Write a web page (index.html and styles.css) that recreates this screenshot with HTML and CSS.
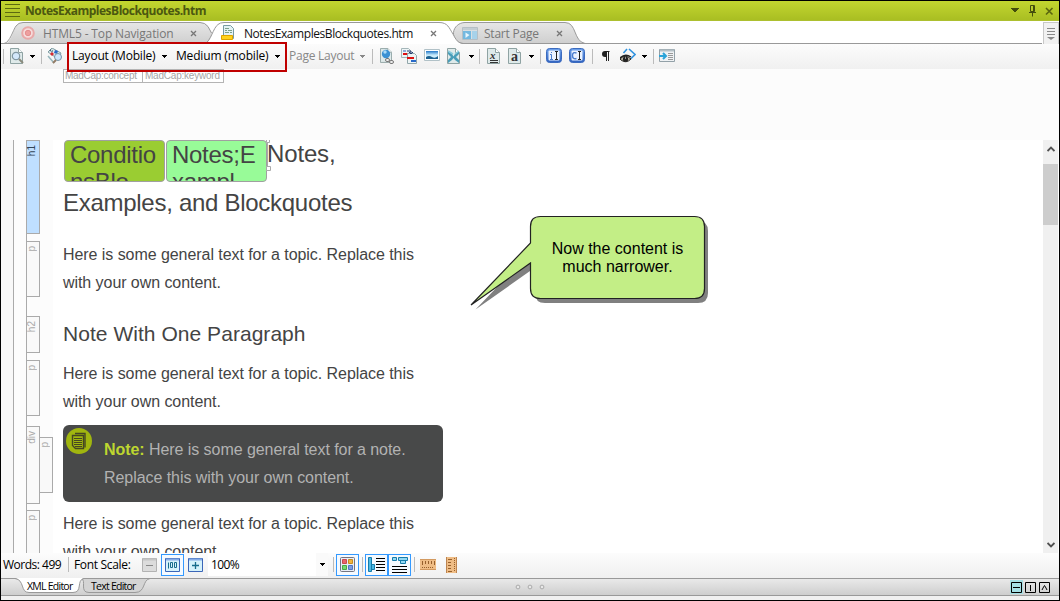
FILE: index.html
```html
<!DOCTYPE html>
<html lang="en">
<head>
<meta charset="utf-8">
<title>NotesExamplesBlockquotes.htm</title>
<link rel="stylesheet" href="styles.css">
</head>
<body>
<svg class="defs" width="0" height="0">
  <defs>
    <linearGradient id="tabGray" x1="0" y1="0" x2="0" y2="1"><stop offset="0" stop-color="#e6e6e6"/><stop offset="1" stop-color="#cfcfcf"/></linearGradient>
    <linearGradient id="blueBtn" x1="0" y1="0" x2="0" y2="1"><stop offset="0" stop-color="#6fa3ec"/><stop offset="1" stop-color="#2f62c0"/></linearGradient>
    <linearGradient id="sky" x1="0" y1="0" x2="0" y2="1"><stop offset="0" stop-color="#2277c8"/><stop offset=".5" stop-color="#c4e9fb"/><stop offset="1" stop-color="#e2f6ff"/></linearGradient>
    <symbol id="page" viewBox="0 0 13 16"><path d="M.5.5h8l4 4v11H.5z" fill="#dfeaea" stroke="#8fa3a3"/><path d="M8.500.5v4h4" fill="#fff" stroke="#8fa3a3"/></symbol>
    <symbol id="down" viewBox="0 0 5 3"><path d="M0 0h5v1H4v1H3v1H2V2H1V1H0z"/></symbol>
  </defs>
</svg>
<div class="window">
  <header class="titlebar">
    <svg class="burger" width="15" height="14"><path d="M0 .5h15M0 4.500h15M0 8.500h15M0 12.500h15" stroke="#5c6a10"/></svg>
    <span class="title">NotesExamplesBlockquotes.htm</span>
    <svg class="winbtns" width="44" height="12"><path d="M1 3h8v1H8v1H7v1H6v1H4V6H3V5H2V4H1z" fill="#434d0c"/><path d="M20.500.5h4v6h-4zM23.500 1v5M19 7.500h7M22.500 8v3.500" fill="none" stroke="#434d0c"/><path d="M36 3l6.500 6.500M42.500 3L36 9.500" stroke="#59650f" stroke-width="1.600"/></svg>
  </header>

  <nav class="tabs">
    <svg class="tabshapes" width="1058" height="24">
      <path d="M0 22.500h4C10 22 12 10 15 5.500Q17.500 1.500 22 1.500H199Q204 1.500 207 5.500L211 12V22.500z" fill="url(#tabGray)"/>
      <path d="M0 22.500h3C9 21.500 12 9 15 5Q17.500 1.500 22 1.500H199Q204 1.500 207 5.500L210.500 12" fill="none" stroke="#999"/>
      <path d="M580 22.500H462C456 22 452 17 452.500 11.500C453 6 458 1.500 464 1.500H564C576 1.500 572 20 584 22.500z" fill="url(#tabGray)" stroke="#999"/>
      <path d="M204 23.500C210 21 212 7 217 3.500Q219 1.500 223 1.500H438C447 1.500 448 7 452 13C455 19 457 22 462 23.500z" fill="#fff"/>
      <path d="M0 22.500H204C210 20 212 7 217 3.500Q219 1.500 223 1.500H438C447 1.500 448 7 452 13C455 19 457 22 462 22.500H1041" fill="none" stroke="#999"/>
    </svg>
    <div class="tab t1">
      <svg width="14" height="14"><circle cx="7" cy="7" r="5.800" fill="#f6dcdc" stroke="#e8a9a9" stroke-width="2"/><circle cx="7" cy="7" r="2.700" fill="#ee9f9f" stroke="#e48f8f"/></svg>
      <span class="label">HTML5 - Top Navigation</span>
      <svg class="x" width="7" height="7"><path d="M1 1l5 5M6 1L1 6"/></svg>
    </div>
    <div class="tab t2">
      <svg width="14" height="16"><path d="M2.500.5h7l3 3v10h-10z" fill="#e3f2f4" stroke="#779ba3"/><path d="M4 3.500h4M4 5.500h2M7 5.500h4M4 7.500h4M9 7.500h2" stroke="#7aa08a"/><path d="M.5 10.500h11v4H.5z" fill="#ffd21c" stroke="#dda400"/></svg>
      <span class="label">NotesExamplesBlockquotes.htm</span>
      <svg class="x" width="7" height="7"><path d="M1 1l5 5M6 1L1 6"/></svg>
    </div>
    <div class="tab t3">
      <svg width="16" height="13"><path d="M.5.500h15v12H.5z" fill="#d9dfe2" stroke="#b5bfc5"/><path d="M1 1h14v2H1z" fill="#c3cdd3"/><path d="M1 4h8v8H1z" fill="#74b9e0"/><path d="M3.500 5.500L7.500 8l-4 3z" fill="#e8f6fd"/><path d="M10 4h5v8h-5z" fill="#a7d2ea"/></svg>
      <span class="label">Start Page</span>
      <svg class="x" width="7" height="7"><path d="M1 1l5 5M6 1L1 6"/></svg>
    </div>
    <div class="tablist"><svg width="8" height="12"><path d="M0 .5h8M0 3.500h8M0 6.500h8" stroke="#888"/><path d="M0 9h8L4 12z" fill="#888"/></svg></div>
  </nav>

  <div class="toolbar">
    <i class="sep"></i>
    <svg class="up" width="15" height="16"><use href="#page" x="1" width="13" height="16"/><circle cx="7" cy="8" r="3.700" fill="#d3e8fb" stroke="#8197a2" stroke-width="1.200"/><path d="M10 11l4 4" stroke="#8a8a7c" stroke-width="2"/></svg>
    <svg class="dn" width="5" height="3"><use href="#down"/></svg>
    <i class="sep"></i>
    <svg class="up" width="16" height="16"><path d="M1 4l4-4 9 5-3 6z" fill="#dce7ea" stroke="#819fa4"/><path d="M3 2l3 2" stroke="#315d73" stroke-width="2" stroke-dasharray="1 1"/><path d="M5 4l2 2-2 2-2-2z" fill="#d72c32"/><path d="M8 2l3 1-1 3-3-1z" fill="#2769c9"/><path d="M1 8l6 7" stroke="#96b6bc" stroke-width="1.500"/><circle cx="11" cy="9" r="3.500" fill="#cbe5fb" stroke="#7493a6"/><path d="M9 12l-3 3" stroke="#937c66" stroke-width="2"/></svg>
    <span class="txt lay">Layout (Mobile)</span>
    <svg class="dn" width="5" height="3"><use href="#down"/></svg>
    <span class="txt med">Medium (mobile)</span>
    <svg class="dn" width="5" height="3"><use href="#down"/></svg>
    <span class="txt pag">Page Layout</span>
    <svg class="dn dim" width="5" height="3"><use href="#down"/></svg>
    <i class="sep"></i>
    <svg class="up1" width="15" height="16"><use href="#page" x="1" width="12" height="15"/><circle cx="7" cy="6" r="4.200" fill="#3b91d3"/><circle cx="6" cy="4" r="1.700" fill="#a9daf8"/><rect x="6.500" y="10.500" width="4" height="3" rx="1.500" fill="#eee" stroke="#777"/><rect x="10.500" y="12.500" width="4" height="3" rx="1.500" fill="#eee" stroke="#777"/></svg>
    <svg class="up1" width="16" height="16"><path d="M.5.500h7l2 2v7h-9z" fill="#edf4f5" stroke="#a4b6b9"/><path d="M2 3h3" stroke="#345fba"/><path d="M2 6h5" stroke="#d11" stroke-width="2"/><path d="M6.500 5.500h7l2 2v8h-9z" fill="#edf4f5" stroke="#91a6aa"/><path d="M6 3h4v2M8 4l2 2 2-2" stroke="#263c70" fill="none"/><path d="M6 10h7" stroke="#d11" stroke-width="2"/><path d="M10 13h5" stroke="#2769c9" stroke-width="2"/></svg>
    <svg class="up4" width="16" height="12"><path d="M.5.500h15v11H.5z" fill="#fff" stroke="#b1c1c7"/><path d="M2 2h12v8H2z" fill="url(#sky)"/><path d="M2 8q3-2 6 0t6-1v3H2z" fill="#1d6291"/></svg>
    <svg class="up1" width="14" height="16"><use href="#page" x="0" width="13" height="16"/><path d="M1 3l4 3 1.500 2.500L8 6l4-3v3L9 9l3 3v3l-4-3-1.500-2L5 12l-4 3v-3l3-3-3-3z" fill="#4a9db8"/><path d="M1 3l5 3M12 3L8 6" stroke="#8acbdc" stroke-width="1.500"/></svg>
    <svg class="dn" width="5" height="3"><use href="#down"/></svg>
    <i class="sep"></i>
    <svg class="up1" width="13" height="16"><use href="#page" width="13" height="16"/><text x="3" y="11" class="glyph it">x</text><path d="M3 12.500h8M3 14.500h8" stroke="#333"/></svg>
    <svg class="up1" width="13" height="16"><use href="#page" width="13" height="16"/><text x="3" y="13" class="glyph big">a</text></svg>
    <svg class="dn" width="5" height="3"><use href="#down"/></svg>
    <i class="sep"></i>
    <svg class="up" width="16" height="15"><rect x=".5" y=".5" width="15" height="14" rx="3" fill="url(#blueBtn)" stroke="#3c6bbe"/><rect x="2.500" y="2.500" width="11" height="10" rx="1" fill="#eaf2ff"/><path d="M5.500 4v1M4 6.500h1.500V11M4 11.500h3" stroke="#4a7dce" fill="none"/><path d="M9 3.500h3M10.500 3.500v8M9 11.500h3" stroke="#222"/></svg>
    <svg class="up" width="16" height="15"><rect x=".5" y=".5" width="15" height="14" rx="3" fill="url(#blueBtn)" stroke="#3c6bbe"/><rect x="2.500" y="2.500" width="11" height="10" rx="1" fill="#eaf2ff"/><path d="M7.500 5Q3.500 3.500 3.500 7.500T7.500 10.500" stroke="#4a7dce" stroke-width="1.400" fill="none"/><path d="M9 3.500h3M10.500 3.500v8M9 11.500h3" stroke="#222"/></svg>
    <i class="sep"></i>
    <svg class="up" width="12" height="12"><path d="M9.500 1H5Q2 1 2 4t3 3h1v4h1V2h1v9h1V2h.5z" fill="#222"/></svg>
    <svg class="up1" width="16" height="16"><path d="M7 1L3.500 5M9 1l6 5.500-4.500 4.500" stroke="#3293df" stroke-width="1.600" fill="none"/><path d="M0 11Q5 5.500 11 11 6 16 1 12z" fill="#beb9a9" stroke="#292723"/><circle cx="5.500" cy="11.200" r="2.600" fill="#222"/><path d="M0 10Q5 5 11 9" stroke="#222" fill="none" stroke-width="1.500"/><path d="M5 10h1" stroke="#fff"/></svg>
    <svg class="dn" width="5" height="3"><use href="#down"/></svg>
    <i class="sep"></i>
    <svg class="up" width="16" height="13"><path d="M.5.500h15v12H.5z" fill="#eff2f4" stroke="#93a1a8"/><path d="M1 1.500h14" stroke="#b4c0c6" stroke-width="2"/><path d="M9 4.500h5M9 6.500h5M9 8.500h5M9 10.500h5" stroke="#999"/><path d="M0 7h6M4 4l3 3-3 3" stroke="#2ba3d8" stroke-width="2" fill="none"/></svg>
    <div class="redbox"></div>
  </div>

  <div class="crumbs"><span class="c1">MadCap:concept</span><span class="c2">MadCap:keyword</span></div>

  <main class="editor">
    <div class="gutter"></div>
    <div class="bars">
      <div class="bar h1b"><b>h1</b></div>
      <div class="bar p1b"><b>p</b></div>
      <div class="bar h2b"><b>h2</b></div>
      <div class="bar p2b"><b>p</b></div>
      <div class="bar divb"><b>div</b><div class="bar inner"><b>p</b></div></div>
      <div class="bar p3b"><b>p</b></div>
    </div>
    <article class="topic">
      <h1><span class="cond olive">Conditio<br>nsBlo</span><span class="cond mint">Notes;E<br>xampl</span><span class="head">Notes,</span><br>Examples, and Blockquotes</h1>
      <p class="first">Here is some general text for a topic. Replace this<br>with your own content.</p>
      <h2>Note With One Paragraph</h2>
      <p>Here is some general text for a topic. Replace this<br>with your own content.</p>
      <div class="note">
        <svg width="26" height="26"><circle cx="13" cy="13" r="13" fill="#a1b60f"/><path d="M9 5.500h10v14" fill="none" stroke="#454622" stroke-width="1.400"/><path d="M6.500 7.500h11v13h-8l-3-3z" fill="none" stroke="#454622" stroke-width="1.400"/><path d="M8 10.500h8M8 12.500h8M8 14.500h8M8 16.500h8M9 18.500h7" stroke="#454622"/></svg>
        <p><strong>Note:</strong> Here is some general text for a note.<br>Replace this with your own content.</p>
      </div>
      <p class="last">Here is some general text for a topic. Replace this<br>with your own content.</p>
      <svg class="handle" width="5" height="31"><path d="M1.500 3v24" stroke="#aaa"/><path d="M.5 0v2.500h3V0M.5 26.500h4v4h-4z" fill="#fff" stroke="#aaa"/></svg>
    </article>
    <div class="callout">
      <svg width="240" height="96"><path transform="translate(4.500 4.500)" fill="#808080" d="M70.500 1.500H223.500Q233.500 1.500 233.500 11.500V73.500Q233.500 83.500 223.500 83.500H70.500Q60.500 83.500 60.500 73.500V48L1 90 60.500 28V11.500Q60.500 1.500 70.500 1.500z"/><path fill="#c3ee86" stroke="#222" stroke-width="1.200" d="M70.500 1.500H224.500Q234.500 1.500 234.500 11.500V73.500Q234.500 83.500 224.500 83.500H70.500Q60.500 83.500 60.500 73.500V48L1 90 60.500 28V11.500Q60.500 1.500 70.500 1.500z"/></svg>
      <div class="calltext">Now the content is<br>much narrower.</div>
    </div>
    <div class="scroll">
      <svg width="8" height="6"><path d="M.5 5L4 1.500 7.500 5" stroke="#505050" stroke-width="1.900" fill="none"/></svg>
      <div class="thumb"></div>
      <svg class="bot" width="8" height="6"><path d="M.5 1L4 4.500 7.500 1" stroke="#505050" stroke-width="1.900" fill="none"/></svg>
    </div>
  </main>

  <div class="status">
    <span class="txt words">Words: 499</span>
    <i class="sep"></i>
    <span class="txt fs">Font Scale:</span>
    <svg width="15" height="14"><path d="M.5.500h14v13H.5z" fill="#dcdcdc" stroke="#b2b2b2"/><path d="M1 1.500h13" stroke="#c5c5c5" stroke-width="2"/><path d="M4 7.500h7" stroke="#888"/></svg>
    <div class="sel s1"><svg width="15" height="14"><path d="M.5.500h14v13H.5z" fill="#d5f2fb" stroke="#3b66b8"/><path d="M1 1.500h13" stroke="#86abe5" stroke-width="2"/><path d="M3.500 4.500v6M5.500 4.500h2v5h-2zM9.500 4.500h2v5h-2z" stroke="#176c8b" fill="none"/></svg></div>
    <svg width="15" height="14"><path d="M.5.500h14v13H.5z" fill="#d5f2fb" stroke="#3b66b8"/><path d="M1 1.500h13" stroke="#86abe5" stroke-width="2"/><path d="M4 7.500h7M7.500 4v7" stroke="#176c8b" stroke-width="1.300"/></svg>
    <div class="combo"><span class="txt pct">100%</span><span class="drop"><svg width="5" height="3"><use href="#down"/></svg></span></div>
    <i class="sep"></i>
    <div class="sel"><svg width="15" height="16"><rect x=".5" y=".5" width="14" height="14" rx="1" fill="#e8edf7" stroke="#727582"/><path d="M2.500 2.500h4v4h-4z" fill="#e9636a" stroke="#c9494f"/><path d="M8.500 2.500h4v4h-4z" fill="#f0b53f" stroke="#c98a1c"/><path d="M2.500 8.500h4v4h-4z" fill="#7ad673" stroke="#48a944"/><path d="M8.500 8.500h4v4h-4z" fill="#7c9de3" stroke="#5274c2"/></svg></div>
    <i class="sep"></i>
    <div class="sel"><svg width="18" height="16"><path d="M.5.500h3v14h-3zM3.500 7.500h3v5h-3z" fill="#4cb9e5" stroke="#167caa"/><path d="M8 1.500h9M8 4.500h9M8 7.500h9M8 10.500h9M8 13.500h9" stroke="#000"/></svg></div>
    <div class="sel s3"><svg width="16" height="16"><path d="M.5.500h4v3h-4zM6.500.5h9v3h-9zM8.500 3.500h5v3h-5z" fill="#91d8f3" stroke="#167caa"/><path d="M0 9.500h15M0 12.500h15M0 15.500h15" stroke="#000"/></svg></div>
    <i class="sep"></i>
    <svg width="16" height="11"><path d="M0 0h16v11H0z" fill="#efbd86"/><path d="M0 .5h16M0 10.500h16" stroke="#d39a60"/><path d="M2.500 2v4M5.500 2v3M8.500 2v3M11.500 2v3M14.500 2v4" stroke="#97602c"/><path d="M2 8.500h12" stroke="#97602c" stroke-dasharray="1 1"/></svg>
    <svg width="11" height="16"><path d="M0 0h11v16H0z" fill="#efbd86"/><path d="M.5 0v16M10.500 0v16" stroke="#bc8450"/><path d="M2 2.500h4M2 5.500h3M2 8.500h3M2 11.500h3M2 14.500h4" stroke="#97602c"/><path d="M8.500 1v14" stroke="#97602c" stroke-dasharray="1 1"/></svg>
  </div>

  <footer class="views">
    <svg class="viewshapes" width="160" height="17"><path d="M80 .5C86 2 78 14.500 88 14.500H134C145 14.500 141 2 149 .5z" fill="#d4d4d4" stroke="#999"/><path d="M14 0C24 2 19 14.500 28 14.500H72C82 14.500 75 2 83 0z" fill="#fff"/><path d="M14 .5C24 2 19 14.500 28 14.500H72C82 14.500 75 2 83 .5" fill="none" stroke="#999"/></svg>
    <span class="view v1">XML Editor</span><span class="view v2">Text Editor</span>
    <svg class="dots" width="30" height="6"><g fill="#e8e8e8" stroke="#aaa"><circle cx="3" cy="3" r="1.900"/><circle cx="15" cy="3" r="1.900"/><circle cx="27" cy="3" r="1.900"/></g></svg>
    <svg class="split" width="41" height="14"><path d="M0 0h13v14H0z" fill="#a5e0e5"/><path d="M1.500 2.500h10v10h-10zM3 7.500h7M15.500 2.500h10v10h-10zM20.500 5v6M29.500 2.500h10v10h-10z" fill="none" stroke="#000"/><path d="M32 10l1-2 1.500-2.500L36 8l1 2" fill="none" stroke="#000"/></svg>
  </footer>
</div>
</body>
</html>
```
FILE: styles.css
```css
* { box-sizing: border-box; }
body { margin: 0; width: 1060px; height: 601px; overflow: hidden; font-family: "Open Sans", "Noto Sans", sans-serif; font-size: 12px; color: #000; }
svg { display: block; flex: none; }
.defs { position: absolute; }
.window { width: 1060px; height: 601px; border: 1px solid #000; background: #f0f0f0; display: flex; flex-direction: column; }
.txt, .label, .title, .view { white-space: nowrap; }

.titlebar { height: 20px; flex: none; display: flex; align-items: center; padding: 0 5px 0 4px; background: linear-gradient(#c3d630, #a9be22); border-bottom: 1px solid #adc02f; }
.title { margin-left: 5px; font-weight: 700; color: #4b5710; letter-spacing: -.49px; }
.winbtns { margin-left: auto; }

.tabs { height: 23px; flex: none; display: flex; position: relative; background: #fff; }
.tabshapes { position: absolute; left: 0; top: 0; }
.tab { position: relative; display: flex; align-items: center; height: 24px; flex: none; }
.t1 { margin-left: 20px; width: 200px; color: #777; }
.t2 { width: 241px; color: #111; }
.t3 { width: 120px; color: #777; }
.t1 .label { margin-left: 8px; width: 147px; letter-spacing: -.14px; }
.t2 .label { margin-left: 9px; width: 186px; letter-spacing: -.44px; }
.t3 .label { margin-left: 6px; width: 72px; letter-spacing: -.22px; }
.x path { stroke: #777; stroke-width: 1.300; }
.tablist { position: relative; margin-left: auto; width: 16px; height: 22px; margin-top: 1px; background: #f1f1f1; border: 1px solid #c8c8c8; border-bottom: 0; display: flex; align-items: center; justify-content: center; }

.toolbar { position: relative; height: 25px; flex: none; padding-left: 2px; display: grid; grid-template-columns: 6px 20px 12px 6px 25px 89px 15px 98px 15px 70px 13px 7px 22px 23px 23px 21px 11px 8px 21px 20px 12px 6px 23px 23px 8px 20px 21px 12px 6px 16px; align-items: center; background: linear-gradient(#fcfcfc, #f0f0f0); }
.sep { display: block; width: 1px; height: 15px; flex: none; background: #bbb; }
.dn { margin-left: 1px; }
.dim { fill: #888; }
.up, .up1 { margin-top: -2px; }
.up4 { margin-top: -4px; }
.lay { letter-spacing: -.18px; }
.med { letter-spacing: -.17px; }
.lay, .med, .pag { margin-top: -2px; }
.pag { color: #888; letter-spacing: -.25px; }
.glyph { font-family: "Liberation Serif", serif; font-weight: 700; font-size: 11px; fill: #333; }
.it { font-style: italic; }
.big { font-size: 14px; }
.redbox { position: absolute; left: 66px; top: -2px; width: 220px; height: 30px; border: 2px solid #c00000; }

.crumbs { height: 71px; flex: none; padding-left: 62px; display: flex; background: #fcfcfc; font: 10px "Liberation Sans", sans-serif; color: #a5a5a5; }
.crumbs span { height: 14px; border: 1px solid #b4b4b4; line-height: 12px; padding-left: 1px; white-space: nowrap; background: #fff; letter-spacing: -.28px; }
.c1 { width: 80px; }
.crumbs .c2 { width: 82px; margin-left: -1px; padding-left: 2px; letter-spacing: -.22px; }

.editor { position: relative; height: 413px; flex: none; display: flex; overflow: hidden; background: #fff; font-family: "Liberation Sans", Arial, sans-serif; }
.gutter { width: 13px; flex: none; background: #f8f8f8; border-right: 1px solid #aaa; }
.bars { width: 39px; padding-left: 12px; flex: none; background: linear-gradient(90deg, #fcfcfc 12px, #aaa 12px, #aaa 13px, #fcfcfc 13px); }
.bar { width: 14px; border: 1px solid #aaa; background: #f9f9f9; display: flex; justify-content: center; font-size: 10px; line-height: 10px; color: #aaa; }
.bar b { font-weight: 400; writing-mode: vertical-rl; transform: rotate(180deg); margin: 4px 3px 0 0; align-self: flex-start; }
.h1b { height: 94px; background: #bfdfff; color: #345; }
.p1b { height: 56px; margin-top: 7px; }
.h2b { height: 37px; margin-top: 19px; }
.p2b { height: 56px; margin-top: 7px; }
.divb { position: relative; height: 78px; margin-top: 10px; }
.inner { position: absolute; left: 12px; top: 10px; height: 56px; }
.p3b { height: 60px; margin-top: 6px; }

.topic { position: relative; width: 391px; padding-left: 10px; flex: none; color: #444; font-size: 16px; line-height: 28px; white-space: nowrap; letter-spacing: -.06px; }
.topic h1 { margin: 0; font-weight: 400; font-size: 24px; height: 88px; line-height: 33px; letter-spacing: -.28px; }
.cond { display: inline-block; vertical-align: top; width: 101px; height: 42px; overflow: hidden; margin: 0 1px 0 0; border: 1px solid #a0a0a0; border-radius: 4px; padding: 0 0 0 5px; line-height: 27px; }
.cond::first-line { line-height: 25px; }
.cond.olive { background: #9acd32; margin-left: 1px; }
.mint { background: #98fb98; }
.head { display: inline-block; vertical-align: top; height: 46px; line-height: 28px; margin-left: -1px; letter-spacing: -.15px; }
.handle { position: absolute; left: 213px; top: 0; }
.topic p { margin: 0; }
.topic .first { padding-top: 13px; }
.topic h2 { margin: 23px 0 12px; font-weight: 400; font-size: 21px; line-height: 28px; letter-spacing: .04px; }
.note { display: flex; width: 380px; height: 77px; margin-top: 9px; border-radius: 6px; background: #484949; color: #b2b2b2; padding: 3px 0 0 3px; }
.topic .note p { margin: 8px 0 0 12px; letter-spacing: -.06px; }
.note strong { color: #bed630; }
.topic .last { margin-top: 8px; }

.callout { position: absolute; left: 469px; top: 75px; width: 240px; height: 96px; color: #111; }
.calltext { position: absolute; left: 61px; top: 25px; width: 173px; text-align: center; font-size: 16px; line-height: 18px; color: #000; }
.scroll { width: 15px; margin: 0 1px 0 auto; background: #f0f0f0; display: flex; flex-direction: column; align-items: center; padding: 6px 0 5px; }
.thumb { width: 15px; height: 61px; margin-top: 12px; background: #cdcdcd; }
.bot { margin-top: auto; }

.status { height: 25px; flex: none; display: flex; align-items: center; padding: 0 0 2px 2px; background: linear-gradient(#fcfcfc, #f0f0f0); }
.words { width: 65px; letter-spacing: -.5px; }
.fs { margin-left: 5px; width: 68px; letter-spacing: -.32px; }
.sel { width: 23px; height: 22px; border: 1px solid #3399ff; background: #f5faff; display: flex; align-items: center; justify-content: center; flex: none; }
.s1 { margin: 0 4px; }
.combo { width: 120px; height: 23px; margin-left: 5px; display: flex; align-items: center; background: #fff; }
.pct { margin-left: 3px; letter-spacing: -.6px; }
.drop { margin-left: auto; width: 12px; height: 23px; display: flex; align-items: center; justify-content: center; background: #fafafa; }
.combo + .sep { margin: 0 2px 0 5px; }
.sel + .sep { margin: 0 2px 0 3px; }
.s3 { margin-left: 0; }
.s3 + .sep { margin-right: 5px; }
.status > svg:last-child { margin-left: 10px; }

.views { position: relative; height: 18px; flex: none; border-top: 1px solid #999; border-bottom: 1px solid #999; background: linear-gradient(#e9e9e9, #cecece); display: flex; align-items: center; font-size: 10.500px; }
.viewshapes { position: absolute; left: 0; top: -1px; }
.view { position: relative; line-height: 14px; margin-top: -2px; }
.v1 { margin-left: 26px; width: 64px; letter-spacing: -.75px; }
.v2 { letter-spacing: -.75px; }
.dots { margin-left: auto; }
.split { margin-left: 465px; margin-right: 8px; }
```
